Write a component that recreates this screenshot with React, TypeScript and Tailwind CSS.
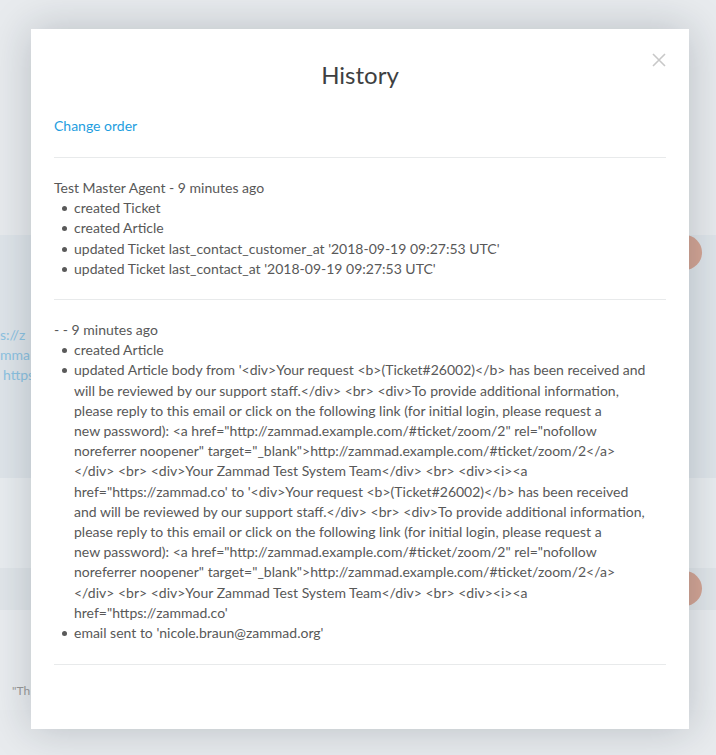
import React from "react";

const entry1 = [
  "created Ticket",
  "created Article",
  "updated Ticket last_contact_customer_at '2018-09-19 09:27:53 UTC'",
  "updated Ticket last_contact_at '2018-09-19 09:27:53 UTC'",
];

const bodyLines = [
  "updated Article body from '<div>Your request <b>(Ticket#26002)</b> has been received and",
  "will be reviewed by our support staff.</div> <br> <div>To provide additional information,",
  "please reply to this email or click on the following link (for initial login, please request a",
  "new password): <a href=\"http://zammad.example.com/#ticket/zoom/2\" rel=\"nofollow",
  "noreferrer noopener\" target=\"_blank\">http://zammad.example.com/#ticket/zoom/2</a>",
  "</div> <br> <div>Your Zammad Test System Team</div> <br> <div><i><a",
  "href=\"https://zammad.co' to '<div>Your request <b>(Ticket#26002)</b> has been received",
  "and will be reviewed by our support staff.</div> <br> <div>To provide additional information,",
  "please reply to this email or click on the following link (for initial login, please request a",
  "new password): <a href=\"http://zammad.example.com/#ticket/zoom/2\" rel=\"nofollow",
  "noreferrer noopener\" target=\"_blank\">http://zammad.example.com/#ticket/zoom/2</a>",
  "</div> <br> <div>Your Zammad Test System Team</div> <br> <div><i><a",
  "href=\"https://zammad.co'",
];

function Bullet({ children }: { children: React.ReactNode }) {
  return (
    <li className="flex">
      <span className="w-[20px] shrink-0 flex justify-center pt-[8px] pl-[1px]">
        <span className="block w-[5px] h-[5px] rounded-full bg-[#5a5a5a]" />
      </span>
      <div className="whitespace-nowrap">{children}</div>
    </li>
  );
}

export default function App() {
  return (
    <div
      className="relative w-[716px] h-[755px] overflow-hidden bg-[#e8ebee]"
      style={{ fontFamily: "Lato, 'Open Sans', sans-serif" }}
    >
      {/* background page */}
      <div className="flex flex-col pt-[235px]">
        <div className="h-[243px] bg-[#dfe5ea] flex flex-col pt-[90px] text-[14px] leading-[20px] text-[#8dc3e2]">
          <div className="whitespace-nowrap">s://z</div>
          <div className="whitespace-nowrap">mma</div>
          <div className="whitespace-nowrap pl-[3px]">https</div>
        </div>
        <div className="h-[90px] bg-[#e9edf0]" />
        <div className="h-[42px] bg-[#e1e6ea]" />
        <div className="h-[100px] bg-[#eaedf0] pt-[72px] pl-[12px] text-[12px] text-[#9a9a9a]">"Th</div>
      </div>
      <div className="absolute left-[667px] top-[235px] w-[35px] h-[35px] rounded-full bg-[#d4a595]" />
      <div className="absolute left-[667px] top-[571px] w-[35px] h-[35px] rounded-full bg-[#d4a595]" />

      {/* modal */}
      <div className="absolute left-[31px] top-[29px] w-[658px] h-[700px] bg-white shadow-[0_0_40px_rgba(20,30,45,0.22)] px-[23px] pt-[30px] text-[#585858]">
        <button className="absolute right-[23px] top-[24px] w-[14px] h-[14px] flex items-center justify-center">
          <svg width="14" height="14" viewBox="0 0 14 14">
            <path d="M1 1L13 13M13 1L1 13" stroke="#c8c8c8" strokeWidth="1.6" />
          </svg>
        </button>
        <h1 className="text-center text-[24px] leading-[32px] text-[#3e3f41]">History</h1>
        <div className="mt-[25px] text-[14px] leading-[20px] text-[#1e9ee0]">Change order</div>
        <div className="mt-[21px] border-t border-[#e8eaeb]" />
        <div className="pt-[20px] pb-[20px] text-[14px] leading-[20.2px]">
          <div>Test Master Agent - 9 minutes ago</div>
          <ul>
            {entry1.map((t) => (
              <Bullet key={t}>{t}</Bullet>
            ))}
          </ul>
        </div>
        <div className="border-t border-[#e8eaeb]" />
        <div className="pt-[20px] pb-[21px] text-[14px] leading-[20.2px]">
          <div>- - 9 minutes ago</div>
          <ul>
            <Bullet>created Article</Bullet>
            <Bullet>
              {bodyLines.map((l, i) => (
                <div key={i}>{l}</div>
              ))}
            </Bullet>
            <Bullet>email sent to 'nicole.braun@zammad.org'</Bullet>
          </ul>
        </div>
        <div className="border-t border-[#e8eaeb]" />
      </div>
    </div>
  );
}
